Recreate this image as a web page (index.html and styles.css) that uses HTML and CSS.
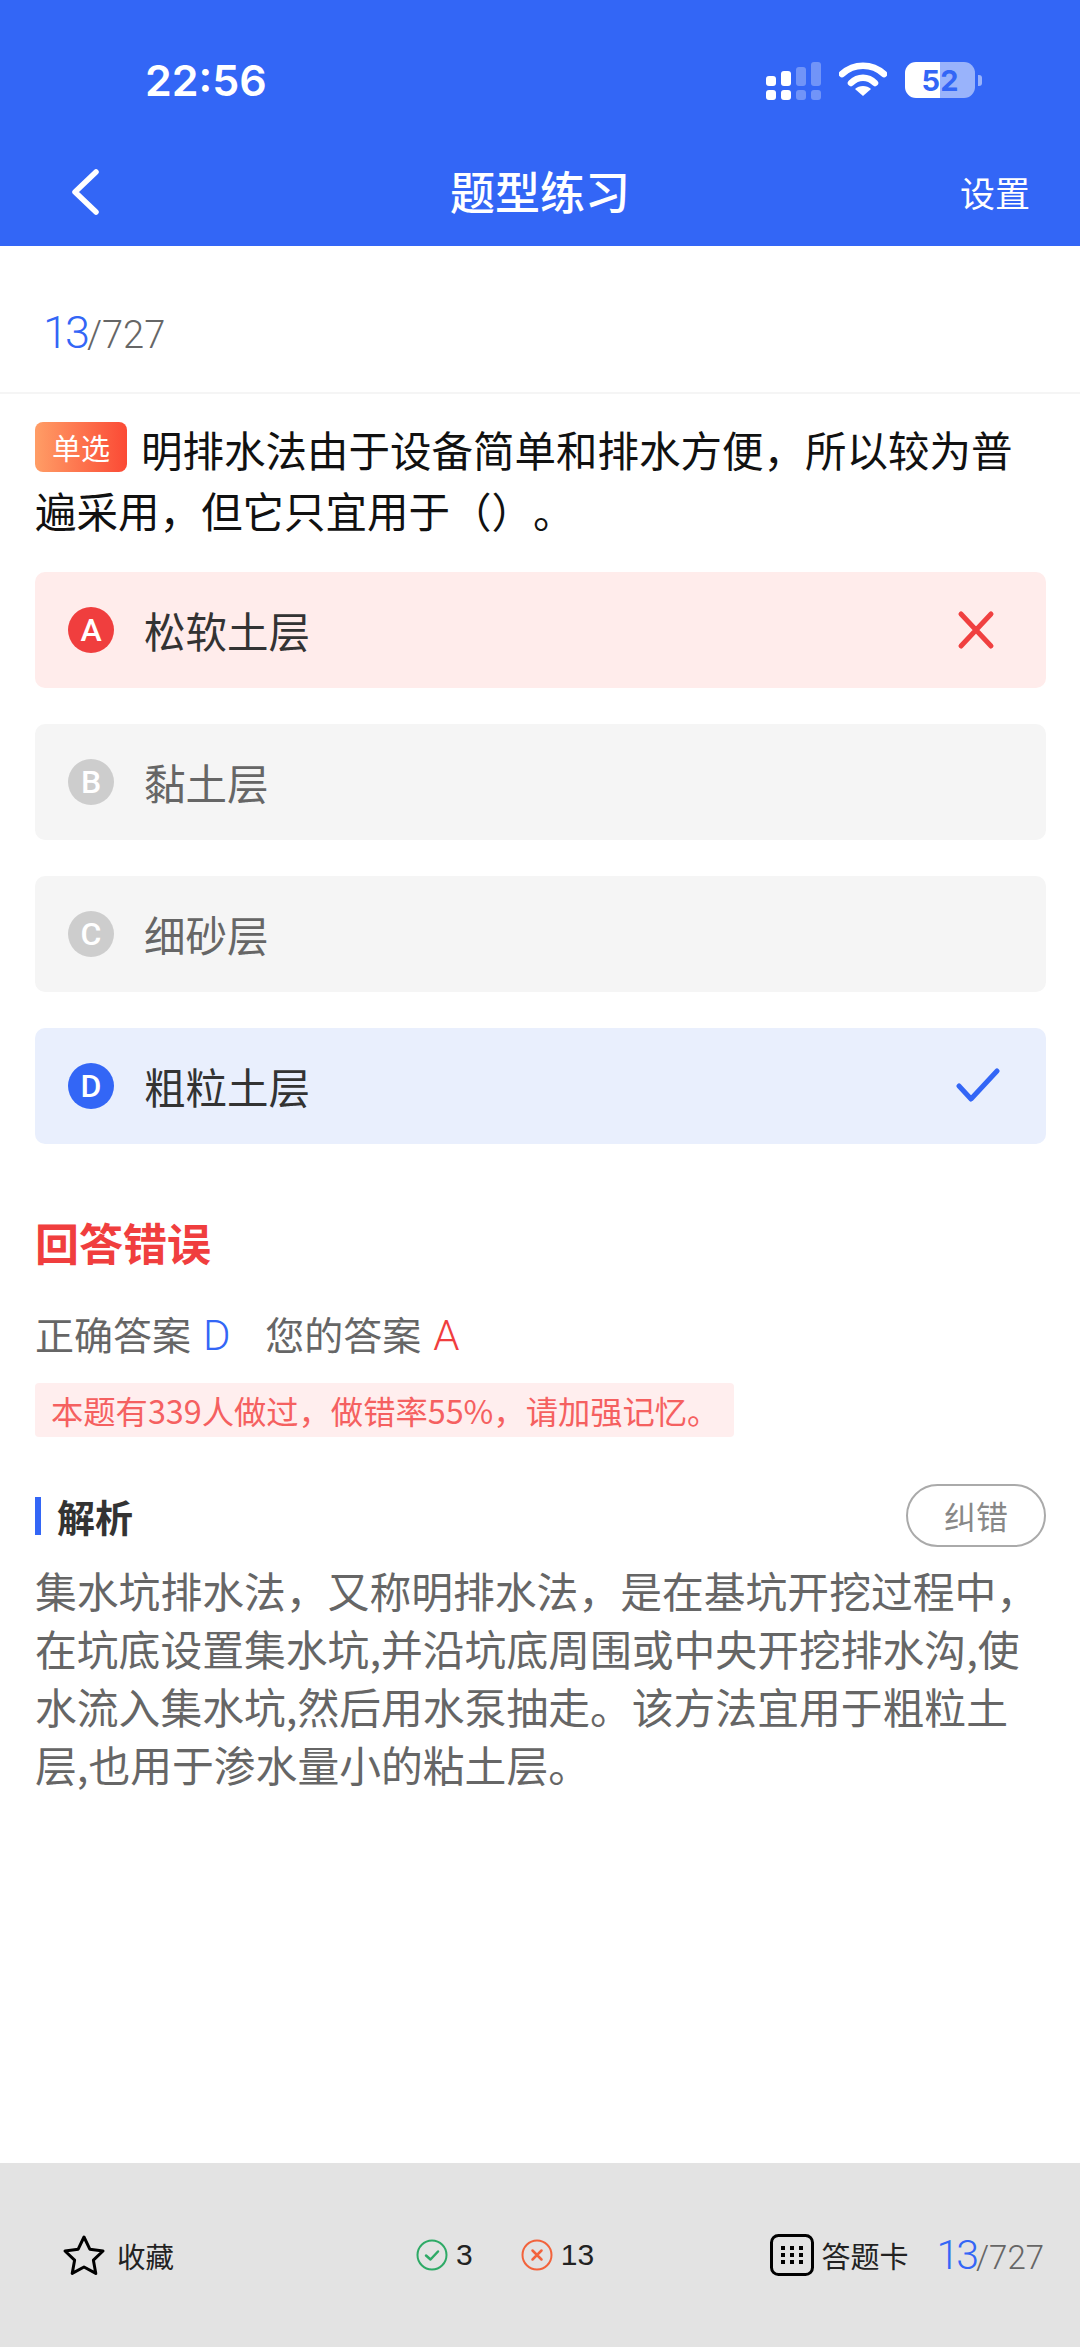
FILE: index.html
```html
<!DOCTYPE html>
<html lang="zh-CN">
<head>
    <meta charset="UTF-8">
    <title>题型练习</title>
    <link rel="stylesheet" href="styles.css">
</head>
<body>
    <header class="top">
        <div class="status">
            <span class="time">22:56</span>
            <div class="status-icons">
                <svg class="signal" width="56" height="38" viewBox="0 0 56 38">
                    <g fill="#fff">
                        <rect x="0" y="14" width="10" height="10" rx="3"/>
                        <rect x="15" y="9" width="10" height="15" rx="3"/>
                        <rect x="0" y="28" width="10" height="10" rx="3"/>
                        <rect x="15" y="28" width="10" height="10" rx="3"/>
                    </g>
                    <g fill="#fff" opacity="0.3">
                        <rect x="30" y="5" width="10" height="19" rx="3"/>
                        <rect x="45" y="0" width="10" height="24" rx="3"/>
                        <rect x="30" y="28" width="10" height="10" rx="3"/>
                        <rect x="45" y="28" width="10" height="10" rx="3"/>
                    </g>
                </svg>
                <svg class="wifi" width="48" height="36" viewBox="0 0 48 36">
                    <path d="M3 13 C15 2 33 2 45 13" fill="none" stroke="#fff" stroke-width="6.5" stroke-linecap="round"/>
                    <path d="M12 22 C19 15 29 15 36 22" fill="none" stroke="#fff" stroke-width="6.5" stroke-linecap="round"/>
                    <path d="M16 28 C20 24 28 24 32 28 L24 35 Z" fill="#fff"/>
                </svg>
                <div class="battery"><span>52</span></div>
                <div class="battery-nub"></div>
            </div>
        </div>
        <div class="nav">
            <svg class="back" width="28" height="46" viewBox="0 0 28 46">
                <path d="M25 3 L4 23 L25 43" fill="none" stroke="#fff" stroke-width="5.5" stroke-linecap="round" stroke-linejoin="round"/>
            </svg>
            <h1 class="title">题型练习</h1>
            <span class="settings">设置</span>
        </div>
    </header>

    <main class="content">
        <div class="counter"><span class="num-now">13</span><span class="num-all">/727</span></div>

        <div class="question">
            <span class="tag">单选</span>明排水法由于设备简单和排水方便，所以较为普遍采用，但它只宜用于（）。
        </div>

        <div class="options">
            <div class="option wrong">
                <span class="letter">A</span>
                <span class="option-text">松软土层</span>
                <svg class="mark" width="44" height="44" viewBox="0 0 44 44">
                    <path d="M7 6 L37 38 M37 6 L7 38" fill="none" stroke="#f04040" stroke-width="5" stroke-linecap="round"/>
                </svg>
            </div>
            <div class="option">
                <span class="letter">B</span>
                <span class="option-text">黏土层</span>
            </div>
            <div class="option">
                <span class="letter">C</span>
                <span class="option-text">细砂层</span>
            </div>
            <div class="option right">
                <span class="letter">D</span>
                <span class="option-text">粗粒土层</span>
                <svg class="mark mark-check" width="44" height="44" viewBox="0 0 44 44">
                    <path d="M3 22 L15 35 L41 7" fill="none" stroke="#3366f6" stroke-width="5" stroke-linecap="round" stroke-linejoin="round"/>
                </svg>
            </div>
        </div>

        <div class="result">回答错误</div>
        <div class="answers">
            <span>正确答案</span><span class="ans-blue">D</span>
            <span class="ans-gap">您的答案</span><span class="ans-red">A</span>
        </div>
        <div class="notice">本题有339人做过，做错率55%，请加强记忆。</div>

        <div class="analysis-head">
            <span class="analysis-title">解析</span>
            <span class="report">纠错</span>
        </div>
        <p class="analysis">集水坑排水法，又称明排水法，是在基坑开挖过程中，在坑底设置集水坑,并沿坑底周围或中央开挖排水沟,使水流入集水坑,然后用水泵抽走。该方法宜用于粗粒土层,也用于渗水量小的粘土层。</p>
    </main>

    <footer class="bottom">
        <div class="collect">
            <svg width="44" height="42" viewBox="0 0 44 42">
                <path d="M22 3 L27.8 15.2 L41 17 L31.4 26.2 L33.8 39.4 L22 33 L10.2 39.4 L12.6 26.2 L3 17 L16.2 15.2 Z" fill="none" stroke="#000" stroke-width="3" stroke-linejoin="round"/>
            </svg>
            <span>收藏</span>
        </div>
        <div class="stats">
            <div class="stat">
                <svg width="32" height="32" viewBox="0 0 32 32">
                    <circle cx="16" cy="16" r="14.5" fill="none" stroke="#2eaa66" stroke-width="2"/>
                    <path d="M10 16.5 L14.5 20.5 L22 12.5" fill="none" stroke="#2eaa66" stroke-width="2.5" stroke-linecap="round" stroke-linejoin="round"/>
                </svg>
                <span>3</span>
            </div>
            <div class="stat">
                <svg width="32" height="32" viewBox="0 0 32 32">
                    <circle cx="16" cy="16" r="14.5" fill="none" stroke="#f2633c" stroke-width="2"/>
                    <path d="M11.5 11.5 L20.5 20.5 M20.5 11.5 L11.5 20.5" fill="none" stroke="#f2633c" stroke-width="2.5" stroke-linecap="round"/>
                </svg>
                <span>13</span>
            </div>
        </div>
        <div class="sheet">
            <svg width="44" height="42" viewBox="0 0 44 42">
                <rect x="1.5" y="1.5" width="41" height="39" rx="7" fill="none" stroke="#000" stroke-width="3"/>
                <g fill="#000">
                    <rect x="11" y="12" width="4" height="4"/>
                    <rect x="20" y="12" width="4" height="4"/>
                    <rect x="29" y="12" width="4" height="4"/>
                    <rect x="11" y="19" width="4" height="4"/>
                    <rect x="20" y="19" width="4" height="4"/>
                    <rect x="29" y="19" width="4" height="4"/>
                    <rect x="11" y="26" width="4" height="4"/>
                    <rect x="20" y="26" width="4" height="4"/>
                    <rect x="29" y="26" width="4" height="4"/>
                </g>
            </svg>
            <span>答题卡</span>
        </div>
        <div class="bottom-count"><span class="num-now">13</span><span class="num-all">/727</span></div>
    </footer>
</body>
</html>
```

FILE: styles.css
```css
* {
    box-sizing: border-box;
}
body {
    font-family: "Noto Sans CJK SC", sans-serif;
    display: flex;
    flex-direction: column;
    height: 2347px;
    margin: 0;
    background-color: #fff;
    color: #333;
    text-spacing-trim: space-all;
}

/* header */
.top {
    height: 246px;
    padding-top: 50px;
    background-color: #3366f6;
    color: #fff;
}
.status {
    display: flex;
    align-items: center;
    justify-content: space-between;
    height: 60px;
    padding: 0 98px 0 145px;
}
.time {
    font-family: Inter, sans-serif;
    font-size: 43px;
    font-weight: 600;
    line-height: 60px;
}
.status-icons {
    display: flex;
    align-items: center;
}
.signal {
    margin-top: 2px;
}
.wifi {
    margin-left: 17px;
    margin-top: -2px;
}
.battery {
    display: flex;
    align-items: center;
    justify-content: center;
    width: 70px;
    height: 36px;
    margin-left: 18px;
    border-radius: 11px;
    background: linear-gradient(90deg, #fff 50%, #99b3fb 50%);
    color: #3366f6;
    font-family: Inter, sans-serif;
    font-size: 29px;
    font-weight: 700;
}
.battery-nub {
    width: 4px;
    height: 11px;
    margin-left: 3px;
    border-radius: 0 3px 3px 0;
    background-color: #99b3fb;
}
.nav {
    display: flex;
    align-items: center;
    justify-content: space-between;
    height: 136px;
    padding: 24px 50px 0 71px;
    position: relative;
}
.back {
    margin-top: 3px;
}
.title {
    position: absolute;
    left: 0;
    right: 0;
    margin: 0;
    font-size: 45px;
    font-weight: 500;
    text-align: center;
}
.settings {
    margin-top: 3px;
    font-size: 35px;
}

/* question */
.content {
    flex: 1;
}
.counter {
    height: 148px;
    padding: 60px 0 0 43px;
    border-bottom: 2px solid #f5f5f5;
}
.num-now {
    font-family: Roboto, sans-serif;
    font-weight: 300;
    color: #3366f6;
    font-size: 45px;
    letter-spacing: -3px;
}
.num-all {
    font-family: Roboto, sans-serif;
    font-weight: 300;
    color: #666;
    font-size: 38px;
}
.question {
    margin: 25px 35px 0;
    font-size: 41.5px;
    line-height: 61px;
    color: #111;
}
.tag {
    display: inline-block;
    width: 92px;
    height: 50px;
    margin-right: 14px;
    border-radius: 8px;
    background: linear-gradient(90deg, #ff9d66, #fb4a35);
    color: #fff;
    font-size: 29px;
    line-height: 50px;
    text-align: center;
    vertical-align: 7px;
}
.options {
    display: flex;
    flex-direction: column;
    gap: 36px;
    margin: 31px 34px 0 35px;
}
.option {
    display: flex;
    align-items: center;
    height: 116px;
    padding: 0 48px 0 33px;
    border-radius: 10px;
    background-color: #f5f5f5;
    color: #666;
    font-size: 41.5px;
}
.letter {
    display: flex;
    align-items: center;
    justify-content: center;
    width: 46px;
    height: 46px;
    border-radius: 50%;
    background-color: #cdcdcd;
    color: #fff;
    font-family: Roboto, sans-serif;
    font-size: 32px;
    font-weight: 500;
}
.option-text {
    flex: 1;
    margin-left: 30px;
}
.mark-check {
    margin-right: -2px;
}
.wrong {
    background-color: #ffeceb;
    color: #333;
}
.wrong .letter {
    background-color: #f03e3e;
}
.right {
    background-color: #e9effd;
    color: #333;
}
.right .letter {
    background-color: #3366f6;
}

/* answer */
.result {
    margin: 68px 35px 0;
    font-size: 44px;
    font-weight: 700;
    line-height: 60px;
    color: #f03e3e;
}
.answers {
    margin: 33px 35px 0;
    font-size: 39px;
    line-height: 56px;
    color: #666;
}
.ans-blue {
    margin-left: 12px;
    font-family: Roboto, sans-serif;
    font-size: 42px;
    font-weight: 300;
    color: #3366f6;
}
.ans-red {
    margin-left: 12px;
    font-family: Roboto, sans-serif;
    font-size: 42px;
    font-weight: 300;
    color: #f03e3e;
}
.ans-gap {
    margin-left: 26px;
}
.notice {
    width: 699px;
    height: 54px;
    margin: 19px 0 0 35px;
    padding-left: 16px;
    border-radius: 4px;
    background-color: #ffeeee;
    color: #f56060;
    font-size: 32.3px;
    line-height: 54px;
    white-space: nowrap;
}
.analysis-head {
    display: flex;
    align-items: center;
    justify-content: space-between;
    margin: 47px 34px 0 35px;
}
.analysis-title {
    padding-left: 16px;
    border-left: 6px solid #3366f6;
    color: #333;
    font-size: 38px;
    font-weight: 700;
    line-height: 38px;
}
.report {
    width: 140px;
    height: 63px;
    border: 2px solid #aaa;
    border-radius: 32px;
    color: #888;
    font-size: 32px;
    line-height: 58px;
    text-align: center;
}
.analysis {
    margin: 14px 29px 0 35px;
    font-size: 41.8px;
    line-height: 58px;
    color: #666;
}

/* bottom bar */
.bottom {
    display: flex;
    align-items: center;
    height: 184px;
    padding: 0 36px 0 62px;
    background-color: #e3e3e3;
    color: #222;
}
.collect {
    display: flex;
    align-items: center;
    gap: 11px;
    font-size: 28.5px;
}
.stats {
    display: flex;
    gap: 48px;
    margin-left: 242px;
    font-family: "Liberation Sans", sans-serif;
    font-size: 30px;
}
.stat {
    display: flex;
    align-items: center;
    gap: 8px;
}
.sheet {
    display: flex;
    align-items: center;
    gap: 7px;
    margin-left: auto;
    font-size: 29px;
}
.bottom-count {
    margin-left: 28px;
}
.bottom-count .num-now {
    font-size: 41px;
}
.bottom-count .num-all {
    font-size: 33px;
}
```
